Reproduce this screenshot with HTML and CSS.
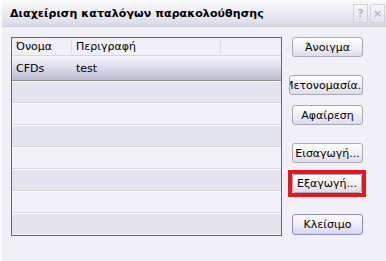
FILE: index.html
```html
<!DOCTYPE html>
<html lang="el">
<head>
    <meta charset="UTF-8">
    <title>Διαχείριση καταλόγων παρακολούθησης</title>
    <link rel="stylesheet" href="styles.css">
</head>
<body>
    <div class="window">
        <div class="titlebar">
            <div class="title">Διαχείριση καταλόγων παρακολούθησης</div>
            <div class="caption-buttons">
                <div class="cap-btn">?</div>
                <div class="cap-btn">×</div>
            </div>
        </div>
        <div class="content">
            <div class="listbox">
                <div class="list-header">
                    <div class="col col-name">Όνομα</div>
                    <div class="col col-desc">Περιγραφή</div>
                    <div class="col col-rest"></div>
                </div>
                <div class="row selected">
                    <div class="col col-name">CFDs</div>
                    <div class="col col-desc">test</div>
                </div>
                <div class="row dark"></div>
                <div class="row"></div>
                <div class="row dark"></div>
                <div class="row"></div>
                <div class="row dark"></div>
                <div class="row"></div>
                <div class="row dark last"></div>
            </div>
            <div class="buttons">
                <button class="btn">Άνοιγμα</button>
                <button class="btn wide gap-lg">Μετονομασία...</button>
                <button class="btn gap-sm">Αφαίρεση</button>
                <button class="btn gap-lg">Εισαγωγή...</button>
                <div class="highlight">
                    <button class="btn">Εξαγωγή...</button>
                </div>
                <button class="btn default gap-close">Κλείσιμο</button>
            </div>
        </div>
    </div>
</body>
</html>
```

FILE: styles.css
```css
body {
    margin: 0;
    padding: 0;
    font-family: "DejaVu Sans", Verdana, sans-serif;
    font-size: 11px;
    color: #000;
    overflow: hidden;
}
.window {
    width: 386px;
    height: 261px;
    background-color: #f1f0f7;
    box-sizing: border-box;
    border-left: 2px solid #fafafd;
}
.titlebar {
    height: 26px;
    display: flex;
    align-items: center;
    justify-content: space-between;
    background: linear-gradient(#fbfbfd, #e9e8f2 60%, #d9d8e6);
    border-bottom: 1px solid #d0cfe0;
}
.title {
    font-weight: bold;
    font-size: 11px;
    padding-left: 8px;
    letter-spacing: 0.1px;
}
.caption-buttons {
    display: flex;
    gap: 2px;
    padding-right: 1px;
    align-self: flex-start;
    margin-top: 4px;
}
.cap-btn {
    width: 13px;
    height: 17px;
    border: 1px solid #d4d3e0;
    background: linear-gradient(#f6f6fa, #e4e3ee);
    color: #b8b8c4;
    font-weight: bold;
    font-size: 11px;
    text-align: center;
    line-height: 17px;
}
.content {
    display: flex;
    padding: 10px 0 0 9px;
}
.listbox {
    width: 269px;
    height: 197px;
    border: 1px solid #68686c;
    background-color: #f3f2f8;
    overflow: hidden;
}
.list-header {
    display: flex;
    height: 17px;
    align-items: center;
    background-color: #f1f0f7;
    border-bottom: 1px solid #d6d5e0;
}
.col {
    box-sizing: border-box;
    padding-left: 3px;
}
.list-header .col {
    height: 13px;
    line-height: 13px;
    border-right: 1px solid #dcdbe4;
}
.list-header .col-rest {
    border-right: none;
}
.col-name {
    width: 60px;
    padding-left: 4px;
}
.col-desc {
    width: 149px;
    padding-left: 4px;
}
.row {
    height: 21px;
    border-bottom: 1px solid #d8d7e2;
    box-shadow: inset 0 1px 0 #fbfbfd;
    display: flex;
    align-items: center;
}
.row.dark {
    background-color: #e5e5ef;
}
.row.last {
    border-bottom: none;
}
.row.selected {
    height: 24px;
    background: linear-gradient(#f3f3f8, #dedded 45%, #bdbbd0);
    border-bottom: 1px solid #8e8da0;
    box-shadow: none;
}
.buttons {
    display: flex;
    flex-direction: column;
    align-items: flex-start;
    margin-left: 10px;
}
.btn {
    width: 71px;
    height: 20px;
    padding: 0;
    font-family: "DejaVu Sans", Verdana, sans-serif;
    font-size: 11px;
    color: #000;
    background: linear-gradient(#ffffff, #f1f1f5 50%, #dcdce6);
    border: 1px solid #a9a8b8;
    border-radius: 3px;
    white-space: nowrap;
    overflow: hidden;
    text-align: center;
}
.btn.wide {
    width: 74px;
    margin-left: -3px;
    text-indent: -6px;
}
.gap-sm {
    margin-top: 10px;
}
.gap-lg {
    margin-top: 18px;
}
.highlight {
    margin-top: 7px;
    margin-left: -4px;
    border: 4px solid #e8141e;
    display: flex;
}
.highlight .btn {
    height: 19px;
    width: 70px;
}
.btn.default {
    margin-top: 17px;
    height: 21px;
    border-color: #8b8ad0;
    background: linear-gradient(#ffffff, #eeeef8 50%, #d6d6ea);
}
```
